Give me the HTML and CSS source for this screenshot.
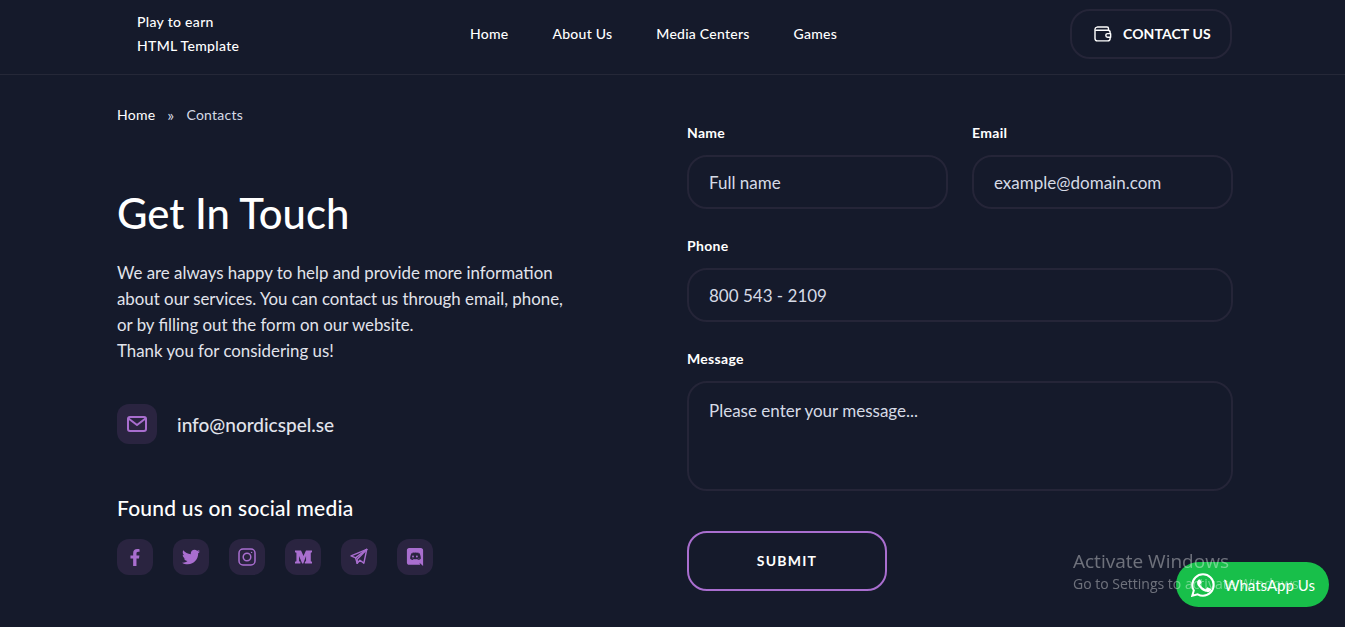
FILE: index.html
```html
<!DOCTYPE html>
<html lang="en">
<head>
<meta charset="utf-8">
<title>Contacts</title>
<link rel="stylesheet" href="styles.css">
</head>
<body>
<header class="header">
  <div class="logo"><span>Play to earn</span><span>HTML Template</span></div>
  <nav class="nav">
    <a href="#">Home</a>
    <a href="#">About Us</a>
    <a href="#">Media Centers</a>
    <a href="#">Games</a>
  </nav>
  <a class="contact-btn" href="#">
    <svg class="wallet" viewBox="0 0 20 18" fill="none" stroke="#fff" stroke-width="1.6" stroke-linejoin="round" stroke-linecap="round"><path d="M4 1.2h10.5c1 0 1.7.8 1.7 1.8v1.8"/><path d="M3.2 1.3C2 1.5 1 2.4 1 3.6V14c0 1.6 1.1 2.7 2.7 2.7h11.6c1.6 0 2.7-1.1 2.7-2.7V7c0-1.4-1.1-2.3-2.7-2.3H2.5"/><path d="M18.6 8.6h-3.4a2 2 0 0 0 0 4h3.4z" fill="#151a2b"/></svg>
    <span class="contact-text">CONTACT US</span>
  </a>
</header>
<main class="main">
  <section class="info">
    <div class="crumbs"><a href="#">Home</a><span class="sep">»</span><span class="cur">Contacts</span></div>
    <h1 class="title">Get In Touch</h1>
    <p class="lead">We are always happy to help and provide more information<br>about our services. You can contact us through email, phone,<br>or by filling out the form on our website.<br>Thank you for considering us!</p>
    <div class="mail">
      <span class="mail-icon"><svg viewBox="0 0 20 16" fill="none" stroke="#a96ecf" stroke-width="2" stroke-linejoin="round" stroke-linecap="round"><rect x="1" y="1" width="18" height="14" rx="2"/><path d="M1.500 2.500 10 9l8.500-6.500"/></svg></span>
      <span class="mail-text">info@nordicspel.se</span>
    </div>
    <h2 class="found">Found us on social media</h2>
    <div class="socials">
      <a class="soc" href="#"><svg class="i-f" viewBox="0 0 320 512" fill="#a96ecf"><path d="M279.14 288l14.22-92.66h-88.91v-60.13c0-25.35 12.42-50.06 52.24-50.06h40.42V6.26S260.43 0 225.36 0c-73.22 0-121.08 44.38-121.08 124.72v70.62H22.89V288h81.39v224h100.17V288z"/></svg></a>
      <a class="soc" href="#"><svg class="i-t" viewBox="0 0 512 512" fill="#a96ecf"><path d="M459.37 151.716c.325 4.548.325 9.097.325 13.645 0 138.72-105.583 298.558-298.558 298.558-59.452 0-114.68-17.219-161.137-47.106 8.447.974 16.568 1.299 25.34 1.299 49.055 0 94.213-16.568 130.274-44.832-46.132-.975-84.792-31.188-98.112-72.772 6.498.974 12.995 1.624 19.818 1.624 9.421 0 18.843-1.3 27.614-3.573-48.081-9.747-84.143-51.98-84.143-102.985v-1.299c13.969 7.797 30.214 12.67 47.431 13.319-28.264-18.843-46.781-51.005-46.781-87.391 0-19.492 5.197-37.36 14.294-52.954 51.655 63.675 129.3 105.258 216.365 109.807-1.624-7.797-2.599-15.918-2.599-24.04 0-57.828 46.782-104.934 104.934-104.934 30.213 0 57.502 12.67 76.67 33.137 23.715-4.548 46.456-13.32 66.599-25.34-7.798 24.366-24.366 44.833-46.132 57.827 21.117-2.273 41.584-8.122 60.426-16.243-14.292 20.791-32.161 39.308-52.628 54.253z"/></svg></a>
      <a class="soc" href="#"><svg class="i-s" viewBox="0 0 18 18" fill="none" stroke="#a96ecf" stroke-width="1.5"><rect x="1" y="1" width="16" height="16" rx="4"/><circle cx="9" cy="9" r="3.800"/><circle cx="13.600" cy="4.400" r=".7" fill="#a96ecf" stroke="none"/></svg></a>
      <a class="soc" href="#"><svg class="i-m" viewBox="0 0 18 14" fill="#a96ecf"><path d="M0 0h6.400L9 6 11.600 0H18v2l-1.300.5v9l1.300.5v2h-7.600v-2l1.300-.5V6L8.800 14H7.600L4.300 6v5.500l1.400.5v2H0v-2l1.500-.5v-9L0 2z"/></svg></a>
      <a class="soc" href="#"><svg class="i-s" viewBox="0 0 20 20" fill="none" stroke="#a96ecf" stroke-width="1.6" stroke-linejoin="round" stroke-linecap="round"><path d="M18.600 1.600 1.200 8.800l5 2.200 1.800 6 3-3.400 4.400 3.200z"/><path d="M18.600 1.600 6.200 11"/><path d="M18.600 1.600 8 12.400 8 17"/></svg></a>
      <a class="soc" href="#"><svg class="i-s" viewBox="0 0 18 20" fill="#a96ecf"><path fill-rule="evenodd" d="M2.400 0h13.200C16.900 0 18 1.100 18 2.400V20l-4-3.600.7 2.300H2.400C1.100 18.700 0 17.600 0 16.300V2.400C0 1.100 1.100 0 2.400 0zM11.500 12.500l.7.900c2.400-.1 3.300-1.600 3.300-1.600 0-3.400-1.500-6.100-1.500-6.100-1.500-1.100-3-1.100-3-1.100l-.2.200c1.800.5 2.600 1.300 2.600 1.300-2.500-1.300-5-1.300-7.300-.3-.4.100-.7.300-.7.300s.9-.9 2.800-1.400l-.1-.1s-1.500 0-3 1.100c0 0-1.500 2.700-1.500 6.100 0 0 .9 1.500 3.200 1.600l.7-.9c-1.300-.4-1.800-1.200-1.800-1.200 1.900 1.300 5.400 1.900 8.600 0 0 0-.5.800-1.800 1.200zM6.800 8.400c-.6 0-1 .5-1 1.100s.5 1.100 1 1.100c.6 0 1-.5 1-1.100s-.4-1.100-1-1.100zm4.300 0c-.6 0-1 .5-1 1.100s.5 1.100 1 1.100c.6 0 1-.5 1-1.100s-.4-1.100-1-1.100z"/></svg></a>
    </div>
  </section>
  <form class="form">
    <div class="row">
      <label class="field"><span class="lbl">Name</span><input class="ctl" type="text" placeholder="Full name"></label>
      <label class="field"><span class="lbl">Email</span><input class="ctl" type="text" placeholder="example@domain.com"></label>
    </div>
    <label class="field"><span class="lbl">Phone</span><input class="ctl" type="text" placeholder="800 543 - 2109"></label>
    <label class="field"><span class="lbl">Message</span><textarea class="ctl area" placeholder="Please enter your message..."></textarea></label>
    <button class="submit" type="button">SUBMIT</button>
  </form>
</main>
<a class="whatsapp" href="#">
  <svg viewBox="0 0 24 24" fill="none"><path d="M12 1.300C6.100 1.300 1.300 6.100 1.300 12c0 2 .5 3.800 1.500 5.500L1.300 22.700l5.400-1.400c1.600.9 3.400 1.400 5.300 1.400 5.900 0 10.700-4.800 10.700-10.700S17.900 1.300 12 1.300z" stroke="#fff" stroke-width="2"/><path d="M8.500 6.400c-.3 0-.8.100-1.200.6-.5.500-1.200 1.300-1.200 2.900s1.200 3.200 1.400 3.400c.2.200 2.400 3.700 5.900 5 2.900 1.100 3.500.9 4.100.8.600-.1 2-.8 2.300-1.600.3-.8.300-1.500.2-1.600-.1-.2-.3-.3-.7-.4l-2.400-1.100c-.3-.1-.6-.2-.8.2l-1.100 1.400c-.2.200-.4.300-.8.100-.4-.2-1.500-.6-2.900-1.800-1.100-1-1.800-2.100-2-2.500-.2-.4 0-.6.200-.8l.9-1.100c.1-.2.200-.4.100-.7L9.400 7c-.2-.6-.5-.6-.9-.6z" fill="#fff"/></svg>
  <span>WhatsApp Us</span>
</a>
<div class="activate"><div class="a1">Activate Windows</div><div class="a2">Go to Settings to activate Windows.</div></div>
</body>
</html>
```
FILE: styles.css
```css
* { box-sizing: border-box; }
html, body { height: 100%; }
body {
  margin: 0;
  background: #151a2b;
  color: #fff;
  font-family: "Lato", "Open Sans", sans-serif;
  overflow: hidden;
}
a { color: inherit; text-decoration: none; }

.header {
  height: 75px;
  border-bottom: 1px solid #252838;
  display: flex;
  align-items: center;
  padding: 0 113px 6px 137px;
}
.logo {
  display: flex;
  flex-direction: column;
  width: 333px;
  font-size: 14px;
  font-weight: 500;
  line-height: 24px;
  letter-spacing: .32px;
}
.nav {
  display: flex;
  gap: 44px;
  flex: 1;
  margin-bottom: 2px;
  font-size: 14px;
  font-weight: 500;
  letter-spacing: .25px;
}
.contact-btn {
  width: 162px;
  height: 50px;
  border: 2px solid #252538;
  border-radius: 20px;
  display: flex;
  align-items: center;
  gap: 11px;
  padding-left: 22px;
  font-size: 14px;
  font-weight: 700;
  letter-spacing: .1px;
}
.contact-text { margin-bottom: 2px; }
.wallet { width: 18px; height: 16px; }

.main {
  display: flex;
  justify-content: space-between;
  padding: 0 112px 0 117px;
}
.info { width: 520px; }
.crumbs {
  margin-top: 30px;
  display: flex;
  align-items: center;
  height: 18px;
  font-size: 14px;
  letter-spacing: .25px;
}
.sep { margin: 0 12px; color: #d6dae6; font-size: 16px; }
.cur { color: #d6dae6; }
.title {
  margin: 66px 0 0;
  font-size: 41.800px;
  line-height: 48px;
  font-weight: 500;
}
.lead {
  margin: 23px 0 0;
  font-size: 16.850px;
  line-height: 26px;
  color: #e2e4ec;
}
.mail {
  margin-top: 40px;
  display: flex;
  align-items: center;
  gap: 20px;
}
.mail-icon {
  width: 40px;
  height: 40px;
  border-radius: 12px;
  background: #2a2440;
  display: flex;
  align-items: center;
  justify-content: center;
}
.mail-icon svg { width: 20px; height: 16px; }
.mail-text { font-size: 19px; font-weight: 500; color: #e2e4ec; }
.found {
  margin: 50px 0 0;
  font-size: 21px;
  line-height: 28px;
  font-weight: 500;
  letter-spacing: .2px;
}
.socials { margin-top: 17px; display: flex; gap: 20px; }
.soc {
  width: 36px;
  height: 36px;
  border-radius: 12px;
  background: #2a2440;
  display: flex;
  align-items: center;
  justify-content: center;
}
.i-f { width: 12px; height: 17px; }
.i-t { width: 18px; height: 18px; }
.i-s { width: 18px; height: 18px; }
.i-m { width: 17px; height: 14px; }

.form {
  width: 546px;
  padding-top: 49px;
  display: flex;
  flex-direction: column;
  gap: 28px;
}
.row { display: flex; gap: 24px; }
.row .field { flex: 1; }
.field { display: flex; flex-direction: column; }
.lbl {
  font-size: 14px;
  font-weight: 700;
  line-height: 18px;
  margin-bottom: 13px;
  letter-spacing: .3px;
}
.ctl {
  width: 100%;
  height: 54px;
  padding: 0 20px;
  border: 2px solid #252538;
  border-radius: 20px;
  background: transparent;
  color: #e2e4ec;
  font-family: inherit;
  font-size: 17px;
  outline: none;
  display: block;
}
.ctl::placeholder { color: #d6dae6; opacity: 1; }
.area {
  height: 110px;
  padding-top: 17px;
  resize: none;
}
.submit {
  margin-top: 12px;
  width: 200px;
  height: 60px;
  padding-bottom: 3px;
  border: 2px solid #a96ecf;
  border-radius: 20px;
  background: transparent;
  color: #fff;
  font-family: inherit;
  font-size: 14px;
  font-weight: 700;
  letter-spacing: 1.2px;
}

.whatsapp {
  position: fixed;
  left: 1176px;
  top: 562px;
  width: 153px;
  height: 45px;
  border-radius: 23px;
  background: #18bf4a;
  display: flex;
  align-items: center;
  gap: 9px;
  padding-left: 15px;
  font-size: 15px;
}
.whatsapp svg { width: 24px; height: 24px; }
.activate {
  position: fixed;
  left: 1073px;
  top: 549px;
  color: rgba(255, 255, 255, .38);
  font-family: "Open Sans", sans-serif;
  pointer-events: none;
  white-space: nowrap;
}
.a1 { font-size: 19px; line-height: 24px; }
.a2 { font-size: 14px; line-height: 22px; }
```
